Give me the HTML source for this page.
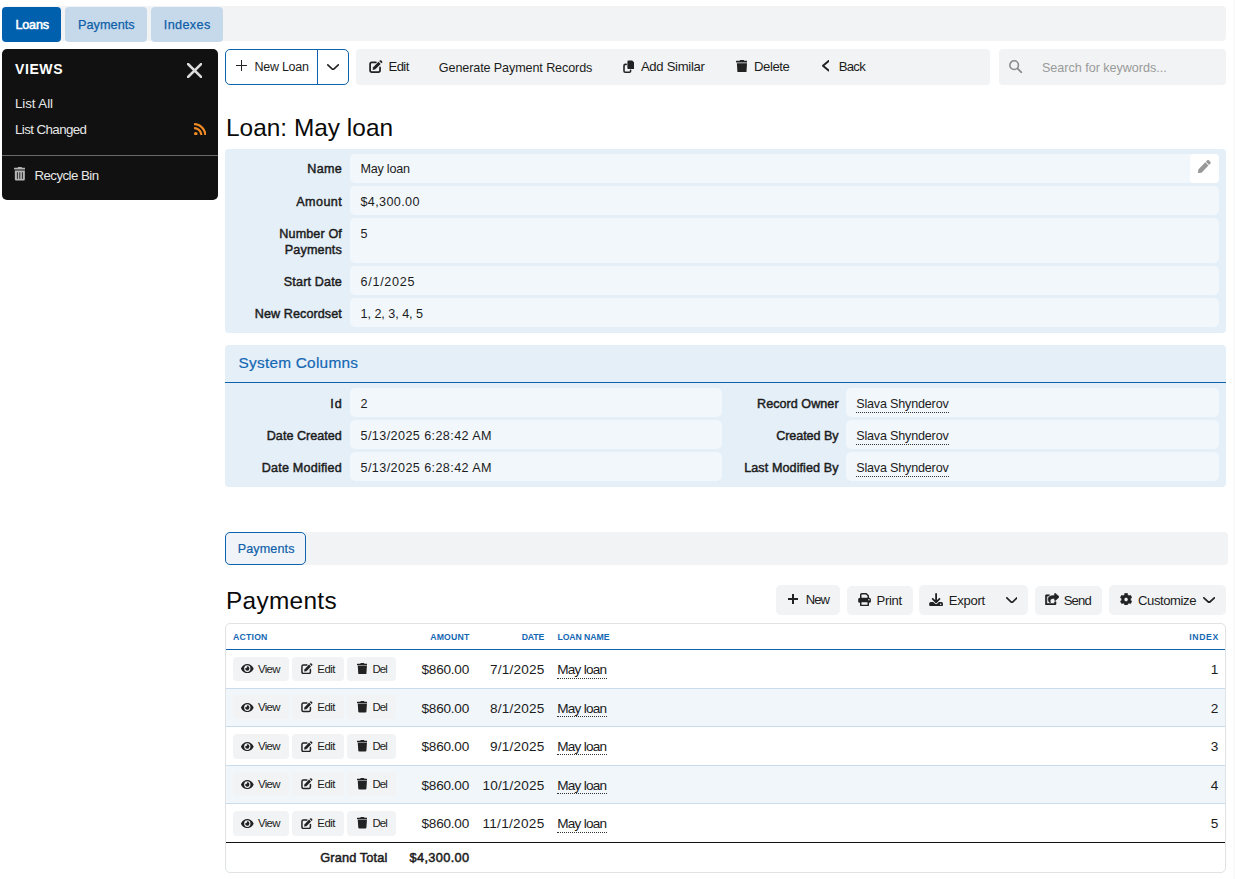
<!DOCTYPE html>
<html lang="en"><head><meta charset="utf-8"><title>Loan: May loan</title>
<style>
html,body{margin:0;padding:0;background:#fff;}
body{width:1235px;height:879px;position:relative;overflow:hidden;font-family:"Liberation Sans", sans-serif;color:#1c1c1c;}
.b{position:absolute;display:block;}
.t{position:absolute;white-space:pre;line-height:1;}
</style></head><body>
<div class="b" style="left:1233px;top:0px;width:2px;height:879px;background:#fafafa;"></div>
<div class="b" style="left:2px;top:6px;width:1224px;height:34.8px;background:#f1f3f4;border-radius:4px;"></div>
<div class="b" style="left:2px;top:7px;width:59px;height:34.8px;background:#0060ae;border-radius:4px;"></div>
<div class="b" style="left:65px;top:7px;width:82px;height:34.8px;background:#c6d9ea;border-radius:4px;"></div>
<div class="b" style="left:151px;top:7px;width:72px;height:34.8px;background:#c6d9ea;border-radius:4px;"></div>
<div class="b" style="left:2px;top:49px;width:216px;height:151px;background:#111;border-radius:5px;"></div>
<div class="b" style="left:2px;top:155px;width:216px;height:1px;background:#6a6a6a;"></div>
<div class="b" style="left:225px;top:49px;width:124px;height:36px;background:#fff;border-radius:5px;border:1.3px solid #0f62ac;box-sizing:border-box;"></div>
<div class="b" style="left:317px;top:49px;width:1.3px;height:36px;background:#0f62ac;"></div>
<div class="b" style="left:236.3px;top:64.525px;width:10.6px;height:1.45px;background:#222;"></div>
<div class="b" style="left:240.87500000000003px;top:59.9px;width:1.45px;height:10.7px;background:#222;"></div>
<div class="b" style="left:356px;top:49px;width:633.5px;height:36px;background:#f1f3f4;border-radius:4px;"></div>
<div class="b" style="left:998.5px;top:49px;width:227.5px;height:36px;background:#f1f3f4;border-radius:4px;"></div>
<div class="b" style="left:225px;top:149px;width:1001px;height:183.8px;background:#e5eff8;border-radius:4px;"></div>
<div class="b" style="left:349.6px;top:154px;width:869.4px;height:28.8px;background:#f2f7fb;border-radius:5px;"></div>
<div class="b" style="left:349.6px;top:186px;width:869.4px;height:28.8px;background:#f2f7fb;border-radius:5px;"></div>
<div class="b" style="left:349.6px;top:218px;width:869.4px;height:44.8px;background:#f2f7fb;border-radius:5px;"></div>
<div class="b" style="left:349.6px;top:266px;width:869.4px;height:28.8px;background:#f2f7fb;border-radius:5px;"></div>
<div class="b" style="left:349.6px;top:298px;width:869.4px;height:28.8px;background:#f2f7fb;border-radius:5px;"></div>
<div class="b" style="left:1190px;top:154px;width:28.8px;height:28.8px;background:#fff;border-radius:4px;"></div>
<div class="b" style="left:225px;top:345px;width:1001px;height:141.7px;background:#e5eff8;border-radius:4px;"></div>
<div class="b" style="left:225px;top:381.5px;width:1001px;height:1.2px;background:#0f62ac;"></div>
<div class="b" style="left:349.6px;top:388px;width:372.4px;height:28.8px;background:#f2f7fb;border-radius:5px;"></div>
<div class="b" style="left:846px;top:388px;width:373px;height:28.8px;background:#f2f7fb;border-radius:5px;"></div>
<div class="b" style="left:349.6px;top:420px;width:372.4px;height:28.8px;background:#f2f7fb;border-radius:5px;"></div>
<div class="b" style="left:846px;top:420px;width:373px;height:28.8px;background:#f2f7fb;border-radius:5px;"></div>
<div class="b" style="left:349.6px;top:452px;width:372.4px;height:28.8px;background:#f2f7fb;border-radius:5px;"></div>
<div class="b" style="left:846px;top:452px;width:373px;height:28.8px;background:#f2f7fb;border-radius:5px;"></div>
<div class="b" style="left:856.2px;top:411.5px;width:92.8px;height:1.0px;background:transparent;border-bottom:1px dotted #333;height:0;"></div>
<div class="b" style="left:856.2px;top:443.5px;width:92.8px;height:1.0px;background:transparent;border-bottom:1px dotted #333;height:0;"></div>
<div class="b" style="left:856.2px;top:475.5px;width:92.8px;height:1.0px;background:transparent;border-bottom:1px dotted #333;height:0;"></div>
<div class="b" style="left:225px;top:532px;width:1003px;height:33px;background:#f1f3f4;border-radius:4px;"></div>
<div class="b" style="left:225px;top:532px;width:80.5px;height:33px;background:#f0f4f9;border-radius:5px;border:1.2px solid #0f62ac;box-sizing:border-box;"></div>
<div class="b" style="left:776px;top:585.2px;width:64px;height:29.4px;background:#f1f3f4;border-radius:5px;"></div>
<div class="b" style="left:788.1px;top:598.475px;width:10.2px;height:1.45px;background:#222;"></div>
<div class="b" style="left:792.475px;top:594px;width:1.45px;height:10.4px;background:#222;"></div>
<div class="b" style="left:847.3px;top:585.8px;width:65.5px;height:28.8px;background:#f1f3f4;border-radius:5px;"></div>
<div class="b" style="left:919px;top:585.2px;width:109px;height:29.4px;background:#f1f3f4;border-radius:5px;"></div>
<div class="b" style="left:1035.2px;top:585.8px;width:66.6px;height:28.8px;background:#f1f3f4;border-radius:5px;"></div>
<div class="b" style="left:1109px;top:585.2px;width:117px;height:29.4px;background:#f1f3f4;border-radius:5px;"></div>
<div class="b" style="left:225px;top:623px;width:1001px;height:249.8px;background:#fff;border-radius:5px;border:1px solid #dfe3e6;box-sizing:border-box;"></div>
<div class="b" style="left:226px;top:688.3px;width:999px;height:38.1px;background:#f1f6fa;"></div>
<div class="b" style="left:226px;top:765.4px;width:999px;height:38.0px;background:#f1f6fa;"></div>
<div class="b" style="left:226px;top:687.8px;width:999px;height:1.0px;background:#c9dcee;"></div>
<div class="b" style="left:226px;top:725.9px;width:999px;height:1.0px;background:#c9dcee;"></div>
<div class="b" style="left:226px;top:764.9px;width:999px;height:1.0px;background:#c9dcee;"></div>
<div class="b" style="left:226px;top:802.9px;width:999px;height:1.0px;background:#c9dcee;"></div>
<div class="b" style="left:226px;top:648.8px;width:999px;height:1.2px;background:#0f62ac;"></div>
<div class="b" style="left:226px;top:842.1px;width:999px;height:1.2px;background:#111;"></div>
<div class="b" style="left:233.1px;top:657.3px;width:55.5px;height:23.5px;background:#f1f3f4;border-radius:4px;"></div>
<div class="b" style="left:292.2px;top:657.3px;width:51.5px;height:23.5px;background:#f1f3f4;border-radius:4px;"></div>
<div class="b" style="left:347.3px;top:657.3px;width:48.6px;height:23.5px;background:#f1f3f4;border-radius:4px;"></div>
<div class="b" style="left:557px;top:677.5px;width:49.6px;height:1.0px;background:transparent;border-bottom:1px dotted #333;height:0;"></div>
<div class="b" style="left:233.1px;top:695.1px;width:55.5px;height:24.3px;background:#f1f3f4;border-radius:4px;"></div>
<div class="b" style="left:292.2px;top:695.1px;width:51.5px;height:24.3px;background:#f1f3f4;border-radius:4px;"></div>
<div class="b" style="left:347.3px;top:695.1px;width:48.6px;height:24.3px;background:#f1f3f4;border-radius:4px;"></div>
<div class="b" style="left:557px;top:716.1px;width:49.6px;height:1.0px;background:transparent;border-bottom:1px dotted #333;height:0;"></div>
<div class="b" style="left:233.1px;top:734.3px;width:55.5px;height:24.3px;background:#f1f3f4;border-radius:4px;"></div>
<div class="b" style="left:292.2px;top:734.3px;width:51.5px;height:24.3px;background:#f1f3f4;border-radius:4px;"></div>
<div class="b" style="left:347.3px;top:734.3px;width:48.6px;height:24.3px;background:#f1f3f4;border-radius:4px;"></div>
<div class="b" style="left:557px;top:754.1px;width:49.6px;height:1.0px;background:transparent;border-bottom:1px dotted #333;height:0;"></div>
<div class="b" style="left:233.1px;top:772.1px;width:55.5px;height:24.3px;background:#f1f3f4;border-radius:4px;"></div>
<div class="b" style="left:292.2px;top:772.1px;width:51.5px;height:24.3px;background:#f1f3f4;border-radius:4px;"></div>
<div class="b" style="left:347.3px;top:772.1px;width:48.6px;height:24.3px;background:#f1f3f4;border-radius:4px;"></div>
<div class="b" style="left:557px;top:793.3px;width:49.6px;height:1.0px;background:transparent;border-bottom:1px dotted #333;height:0;"></div>
<div class="b" style="left:233.1px;top:811.3px;width:55.5px;height:24.3px;background:#f1f3f4;border-radius:4px;"></div>
<div class="b" style="left:292.2px;top:811.3px;width:51.5px;height:24.3px;background:#f1f3f4;border-radius:4px;"></div>
<div class="b" style="left:347.3px;top:811.3px;width:48.6px;height:24.3px;background:#f1f3f4;border-radius:4px;"></div>
<div class="b" style="left:557px;top:831.5px;width:49.6px;height:1.0px;background:transparent;border-bottom:1px dotted #333;height:0;"></div>
<svg class="b" style="left:186.8px;top:62.9px;" width="15.3" height="15.0" viewBox="0 0 15.3 15" fill="#222" stroke="none" preserveAspectRatio="none"><path d="M1 1L14.3 14M14.3 1L1 14" fill="none" stroke="#dcdcdc" stroke-width="2.5" stroke-linecap="round"/></svg>
<svg class="b" style="left:193.7px;top:122.8px;" width="12.5" height="12.5" viewBox="0 32 448 448" fill="#f08a24" stroke="none" preserveAspectRatio="none"><path d="M128.081 415.959c0 35.369-28.672 64.041-64.041 64.041S0 451.328 0 415.959s28.672-64.041 64.041-64.041 64.040 28.673 64.040 64.041zm175.660 47.250c-8.354-154.600-132.185-278.587-286.950-286.950C7.656 175.765 0 183.105 0 192.253v48.069c0 8.415 6.490 15.472 14.887 16.018 111.832 7.284 201.473 96.702 208.772 208.772.547 8.397 7.604 14.887 16.018 14.887h48.069c9.149.001 16.489-7.655 15.995-16.790zm144.249.288C439.596 229.677 251.465 40.445 16.503 32.010 7.473 31.686 0 38.981 0 48.016v48.068c0 8.625 6.835 15.645 15.453 15.999 191.179 7.839 344.627 161.316 352.465 352.465.353 8.618 7.373 15.453 15.999 15.453h48.068c9.034-.001 16.329-7.474 16.005-16.504z"/></svg>
<svg class="b" style="left:13.6px;top:167.3px;" width="11.7" height="13.6" viewBox="0 0 448 512" fill="#b5b5b5" stroke="none" preserveAspectRatio="none"><path d="M32 464a48 48 0 0 0 48 48h288a48 48 0 0 0 48-48V128H32zm272-256a16 16 0 0 1 32 0v224a16 16 0 0 1-32 0zm-96 0a16 16 0 0 1 32 0v224a16 16 0 0 1-32 0zm-96 0a16 16 0 0 1 32 0v224a16 16 0 0 1-32 0zM432 32H312l-9.400-18.700A24 24 0 0 0 281.100 0H166.800a23.720 23.720 0 0 0-21.400 13.300L136 32H16A16 16 0 0 0 0 48v32a16 16 0 0 0 16 16h416a16 16 0 0 0 16-16V48a16 16 0 0 0-16-16z"/></svg>
<svg class="b" style="left:326.9px;top:63.6px;" width="12.1" height="6.6" viewBox="0 0 12.100000000000023 6.600000000000001" fill="#222" stroke="none" preserveAspectRatio="none"><polyline points="0.8,0.8 6.050000000000011,5.800000000000002 11.300000000000022,0.8" fill="none" stroke="#222" stroke-width="1.6" stroke-linecap="round" stroke-linejoin="round"/></svg>
<svg class="b" style="left:369px;top:59.5px;" width="13.6" height="13.0" viewBox="0 0 13.6 13" fill="#222" stroke="none" preserveAspectRatio="none"><path d="M6.9 2.35H2.9a1.8 1.8 0 0 0-1.8 1.8v6.1a1.8 1.8 0 0 0 1.8 1.8h6.35a1.8 1.8 0 0 0 1.8-1.8V7.4" fill="none" stroke="#222" stroke-width="1.75" stroke-linecap="round"/><path d="M3.6 9.9l.55-2.75L9.5 1.8l2.2 2.2-5.35 5.35z" fill="#222"/><path d="M10.2 1.1l.55-.55a1.15 1.15 0 0 1 1.6 0l.65.65a1.15 1.15 0 0 1 0 1.6l-.55.55z" fill="#222"/></svg>
<svg class="b" style="left:622.8px;top:59.6px;" width="11.6" height="13.0" viewBox="0 0 11.6 13" fill="#222" stroke="none" preserveAspectRatio="none"><path d="M3.2 4.4H2.3a1.3 1.3 0 0 0-1.3 1.3v5.2a1.3 1.3 0 0 0 1.3 1.3h4a1.3 1.3 0 0 0 1.3-1.3v-0.5" fill="none" stroke="#222" stroke-width="1.6" stroke-linecap="round"/><path d="M5.6 0.4H9.2L11.4 2.6V7.9a1.2 1.2 0 0 1-1.2 1.2H5.6a1.2 1.2 0 0 1-1.2-1.2V1.6a1.2 1.2 0 0 1 1.2-1.2z" fill="#222"/></svg>
<svg class="b" style="left:735.6px;top:59.6px;" width="11.9" height="12.9" viewBox="0 0 448 512" fill="#222" stroke="none" preserveAspectRatio="none"><path d="M432 32H312l-9.400-18.700A24 24 0 0 0 281.100 0H166.800a23.720 23.720 0 0 0-21.400 13.300L136 32H16A16 16 0 0 0 0 48v32a16 16 0 0 0 16 16h416a16 16 0 0 0 16-16V48a16 16 0 0 0-16-16zM53.200 467a48 48 0 0 0 47.900 45h245.800a48 48 0 0 0 47.900-45L416 128H32z"/></svg>
<svg class="b" style="left:821.6px;top:60.3px;" width="7.6" height="11.5" viewBox="0 0 7.600000000000023 11.5" fill="#222" stroke="none" preserveAspectRatio="none"><polyline points="6.650000000000023,0.95 0.95,5.75 6.650000000000023,10.55" fill="none" stroke="#222" stroke-width="1.9" stroke-linecap="round" stroke-linejoin="round"/></svg>
<svg class="b" style="left:1009.4px;top:60.1px;" width="13.2" height="13.2" viewBox="0 0 12.8 12.8" fill="#222" stroke="none" preserveAspectRatio="none"><circle cx="5" cy="5" r="4.2" fill="none" stroke="#8a8a8a" stroke-width="1.5"/><line x1="8.2" y1="8.2" x2="12" y2="12" stroke="#8a8a8a" stroke-width="1.7" stroke-linecap="round"/></svg>
<svg class="b" style="left:1198.2px;top:160.4px;" width="12.8" height="13.0" viewBox="0 0 512 512" fill="#989898" stroke="none" preserveAspectRatio="none"><path d="M290.740 93.240l128.020 128.020-277.990 277.990-114.140 12.600C11.350 513.540-1.560 500.620.140 485.340l12.700-114.220 277.900-277.880zm207.200-19.060l-60.110-60.110c-18.750-18.750-49.160-18.750-67.910 0l-56.550 56.550 128.020 128.020 56.550-56.550c18.750-18.760 18.750-49.160 0-67.910z"/></svg>
<svg class="b" style="left:857.7px;top:592.5px;" width="13.1" height="13.3" viewBox="0 0 13.1 13.3" fill="#222" stroke="none" preserveAspectRatio="none"><path d="M2.75 5V1.75a1 1 0 0 1 1-1h4.5l2 2V5" fill="none" stroke="#222" stroke-width="1.5" stroke-linejoin="round"/><rect x="0.2" y="4.8" width="12.7" height="5" rx="1.6" fill="#222"/><circle cx="10.9" cy="6.7" r="0.7" fill="#f1f3f4"/><rect x="2.75" y="8.4" width="7.5" height="4.1" rx="0.6" fill="#f1f3f4" stroke="#222" stroke-width="1.5"/></svg>
<svg class="b" style="left:928.9px;top:592.5px;" width="14.2" height="13.3" viewBox="0 0 14.2 13.3" fill="#222" stroke="none" preserveAspectRatio="none"><path d="M1.7 8.9H12.5a1.5 1.5 0 0 1 1.5 1.5v1.4a1.5 1.5 0 0 1-1.5 1.5H1.7a1.5 1.5 0 0 1-1.5-1.5v-1.4a1.5 1.5 0 0 1 1.5-1.5z" fill="#222"/><circle cx="11.7" cy="11.15" r="0.75" fill="#f1f3f4"/><path d="M7.1 0.9v8.3M3.7 5.9l3.4 3.4 3.4-3.4" fill="none" stroke="#f1f3f4" stroke-width="3.6" stroke-linecap="round" stroke-linejoin="round"/><path d="M7.1 0.9v8.3M3.7 5.9l3.4 3.4 3.4-3.4" fill="none" stroke="#222" stroke-width="1.8" stroke-linecap="round" stroke-linejoin="round"/></svg>
<svg class="b" style="left:1005.7px;top:596.9px;" width="11.8" height="6.6" viewBox="0 0 11.799999999999955 6.600000000000023" fill="#222" stroke="none" preserveAspectRatio="none"><polyline points="0.85,0.85 5.899999999999977,5.750000000000023 10.949999999999955,0.85" fill="none" stroke="#222" stroke-width="1.7" stroke-linecap="round" stroke-linejoin="round"/></svg>
<svg class="b" style="left:1044.8px;top:592.9px;" width="14.4" height="12.3" viewBox="-11 -11 598 534" fill="#222" stroke="none" preserveAspectRatio="none"><path stroke="#222" stroke-width="22" stroke-linejoin="round" d="M568.482 177.448L424.479 313.433C409.300 327.768 384 317.140 384 295.985v-71.963c-144.575.970-205.566 35.113-164.775 171.353 4.483 14.973-12.846 26.567-25.006 17.330C155.252 383.105 120 326.488 120 269.339c0-143.937 117.599-172.500 264-173.312V24.012c0-21.174 25.317-31.768 40.479-17.448l144.003 135.988c10.020 9.463 10.028 25.425 0 34.896zM384 379.128V448H64V128h50.916a11.990 11.990 0 0 0 8.648-3.693c14.953-15.568 32.237-27.890 51.014-37.676C185.708 80.830 181.584 64 169.033 64H48C21.490 64 0 85.490 0 112v352c0 26.510 21.490 48 48 48h352c26.510 0 48-21.490 48-48v-88.806c0-8.288-8.197-14.066-16.011-11.302a71.830 71.830 0 0 1-34.189 3.377c-7.270-1.046-13.800 4.514-13.800 11.859z"/></svg>
<svg class="b" style="left:1119.5px;top:592.5px;" width="12.2" height="12.9" viewBox="0 0 512 512" fill="#222" stroke="none" preserveAspectRatio="none"><path stroke="#222" stroke-width="18" stroke-linejoin="round" d="M487.400 315.700l-42.600-24.600c4.300-23.200 4.300-47 0-70.200l42.600-24.600c4.900-2.800 7.100-8.600 5.500-14-11.100-35.600-30-67.800-54.700-94.600-3.800-4.100-10-5.100-14.800-2.300L380.800 110c-17.900-15.400-38.500-27.300-60.800-35.100V25.800c0-5.600-3.900-10.500-9.400-11.700-36.700-8.200-74.300-7.800-109.200 0-5.500 1.200-9.400 6.100-9.400 11.700V75c-22.200 7.900-42.800 19.800-60.800 35.100L88.700 85.500c-4.900-2.800-11-1.900-14.800 2.300-24.700 26.700-43.600 58.900-54.700 94.600-1.700 5.400.6 11.200 5.500 14L67.300 221c-4.300 23.200-4.300 47 0 70.200l-42.600 24.600c-4.900 2.800-7.100 8.600-5.500 14 11.100 35.600 30 67.800 54.700 94.600 3.800 4.100 10 5.100 14.800 2.300l42.600-24.600c17.900 15.400 38.500 27.300 60.800 35.100v49.200c0 5.600 3.900 10.500 9.400 11.700 36.700 8.200 74.300 7.800 109.200 0 5.500-1.200 9.400-6.100 9.400-11.700v-49.200c22.200-7.900 42.800-19.800 60.800-35.100l42.600 24.600c4.900 2.800 11 1.900 14.800-2.300 24.700-26.700 43.600-58.900 54.700-94.600 1.500-5.500-.7-11.300-5.600-14.100zM256 336c-44.100 0-80-35.900-80-80s35.900-80 80-80 80 35.900 80 80-35.900 80-80 80z"/></svg>
<svg class="b" style="left:1203.2px;top:596.9px;" width="12.2" height="6.6" viewBox="0 0 12.200000000000045 6.600000000000023" fill="#222" stroke="none" preserveAspectRatio="none"><polyline points="0.85,0.85 6.100000000000023,5.750000000000023 11.350000000000046,0.85" fill="none" stroke="#222" stroke-width="1.7" stroke-linecap="round" stroke-linejoin="round"/></svg>
<svg class="b" style="left:241.2px;top:664.4499999999999px;" width="12.6" height="9.1" viewBox="0 64 576 384" fill="#222" stroke="none" preserveAspectRatio="none"><path d="M572.520 241.400C518.290 135.590 410.930 64 288 64S57.680 135.640 3.480 241.410a32.350 32.350 0 0 0 0 29.190C57.710 376.410 165.070 448 288 448s230.320-71.640 284.520-177.410a32.350 32.350 0 0 0 0-29.190zM288 400a144 144 0 1 1 144-144 143.930 143.930 0 0 1-144 144zm0-240a95.310 95.310 0 0 0-25.310 3.790 47.850 47.850 0 0 1-66.900 66.900A95.780 95.780 0 1 0 288 160z"/></svg>
<svg class="b" style="left:301px;top:663.15px;" width="11.6" height="11.3" viewBox="0 0 13.6 13" fill="#222" stroke="none" preserveAspectRatio="none"><path d="M6.9 2.35H2.9a1.8 1.8 0 0 0-1.8 1.8v6.1a1.8 1.8 0 0 0 1.8 1.8h6.35a1.8 1.8 0 0 0 1.8-1.8V7.4" fill="none" stroke="#222" stroke-width="1.75" stroke-linecap="round"/><path d="M3.6 9.9l.55-2.75L9.5 1.8l2.2 2.2-5.35 5.35z" fill="#222"/><path d="M10.2 1.1l.55-.55a1.15 1.15 0 0 1 1.6 0l.65.65a1.15 1.15 0 0 1 0 1.6l-.55.55z" fill="#222"/></svg>
<svg class="b" style="left:356.5px;top:662.9499999999999px;" width="10.7" height="11.4" viewBox="0 0 448 512" fill="#222" stroke="none" preserveAspectRatio="none"><path d="M432 32H312l-9.400-18.700A24 24 0 0 0 281.100 0H166.800a23.720 23.720 0 0 0-21.400 13.300L136 32H16A16 16 0 0 0 0 48v32a16 16 0 0 0 16 16h416a16 16 0 0 0 16-16V48a16 16 0 0 0-16-16zM53.200 467a48 48 0 0 0 47.900 45h245.800a48 48 0 0 0 47.900-45L416 128H32z"/></svg>
<svg class="b" style="left:241.2px;top:702.65px;" width="12.6" height="9.1" viewBox="0 64 576 384" fill="#222" stroke="none" preserveAspectRatio="none"><path d="M572.520 241.400C518.290 135.590 410.930 64 288 64S57.680 135.640 3.480 241.410a32.350 32.350 0 0 0 0 29.190C57.710 376.410 165.070 448 288 448s230.320-71.640 284.520-177.410a32.350 32.350 0 0 0 0-29.190zM288 400a144 144 0 1 1 144-144 143.930 143.930 0 0 1-144 144zm0-240a95.310 95.310 0 0 0-25.310 3.790 47.850 47.850 0 0 1-66.900 66.900A95.780 95.780 0 1 0 288 160z"/></svg>
<svg class="b" style="left:301px;top:701.35px;" width="11.6" height="11.3" viewBox="0 0 13.6 13" fill="#222" stroke="none" preserveAspectRatio="none"><path d="M6.9 2.35H2.9a1.8 1.8 0 0 0-1.8 1.8v6.1a1.8 1.8 0 0 0 1.8 1.8h6.35a1.8 1.8 0 0 0 1.8-1.8V7.4" fill="none" stroke="#222" stroke-width="1.75" stroke-linecap="round"/><path d="M3.6 9.9l.55-2.75L9.5 1.8l2.2 2.2-5.35 5.35z" fill="#222"/><path d="M10.2 1.1l.55-.55a1.15 1.15 0 0 1 1.6 0l.65.65a1.15 1.15 0 0 1 0 1.6l-.55.55z" fill="#222"/></svg>
<svg class="b" style="left:356.5px;top:701.15px;" width="10.7" height="11.4" viewBox="0 0 448 512" fill="#222" stroke="none" preserveAspectRatio="none"><path d="M432 32H312l-9.400-18.700A24 24 0 0 0 281.100 0H166.800a23.720 23.720 0 0 0-21.400 13.300L136 32H16A16 16 0 0 0 0 48v32a16 16 0 0 0 16 16h416a16 16 0 0 0 16-16V48a16 16 0 0 0-16-16zM53.200 467a48 48 0 0 0 47.900 45h245.800a48 48 0 0 0 47.900-45L416 128H32z"/></svg>
<svg class="b" style="left:241.2px;top:741.85px;" width="12.6" height="9.1" viewBox="0 64 576 384" fill="#222" stroke="none" preserveAspectRatio="none"><path d="M572.520 241.400C518.290 135.590 410.930 64 288 64S57.680 135.640 3.480 241.410a32.350 32.350 0 0 0 0 29.190C57.710 376.410 165.070 448 288 448s230.320-71.640 284.520-177.410a32.350 32.350 0 0 0 0-29.190zM288 400a144 144 0 1 1 144-144 143.930 143.930 0 0 1-144 144zm0-240a95.310 95.310 0 0 0-25.310 3.790 47.850 47.850 0 0 1-66.900 66.900A95.780 95.780 0 1 0 288 160z"/></svg>
<svg class="b" style="left:301px;top:740.5500000000001px;" width="11.6" height="11.3" viewBox="0 0 13.6 13" fill="#222" stroke="none" preserveAspectRatio="none"><path d="M6.9 2.35H2.9a1.8 1.8 0 0 0-1.8 1.8v6.1a1.8 1.8 0 0 0 1.8 1.8h6.35a1.8 1.8 0 0 0 1.8-1.8V7.4" fill="none" stroke="#222" stroke-width="1.75" stroke-linecap="round"/><path d="M3.6 9.9l.55-2.75L9.5 1.8l2.2 2.2-5.35 5.35z" fill="#222"/><path d="M10.2 1.1l.55-.55a1.15 1.15 0 0 1 1.6 0l.65.65a1.15 1.15 0 0 1 0 1.6l-.55.55z" fill="#222"/></svg>
<svg class="b" style="left:356.5px;top:740.35px;" width="10.7" height="11.4" viewBox="0 0 448 512" fill="#222" stroke="none" preserveAspectRatio="none"><path d="M432 32H312l-9.400-18.700A24 24 0 0 0 281.100 0H166.800a23.720 23.720 0 0 0-21.400 13.300L136 32H16A16 16 0 0 0 0 48v32a16 16 0 0 0 16 16h416a16 16 0 0 0 16-16V48a16 16 0 0 0-16-16zM53.200 467a48 48 0 0 0 47.900 45h245.800a48 48 0 0 0 47.900-45L416 128H32z"/></svg>
<svg class="b" style="left:241.2px;top:779.65px;" width="12.6" height="9.1" viewBox="0 64 576 384" fill="#222" stroke="none" preserveAspectRatio="none"><path d="M572.520 241.400C518.290 135.590 410.930 64 288 64S57.680 135.640 3.480 241.410a32.350 32.350 0 0 0 0 29.190C57.710 376.410 165.070 448 288 448s230.320-71.640 284.520-177.410a32.350 32.350 0 0 0 0-29.190zM288 400a144 144 0 1 1 144-144 143.930 143.930 0 0 1-144 144zm0-240a95.310 95.310 0 0 0-25.310 3.790 47.850 47.850 0 0 1-66.900 66.900A95.780 95.780 0 1 0 288 160z"/></svg>
<svg class="b" style="left:301px;top:778.35px;" width="11.6" height="11.3" viewBox="0 0 13.6 13" fill="#222" stroke="none" preserveAspectRatio="none"><path d="M6.9 2.35H2.9a1.8 1.8 0 0 0-1.8 1.8v6.1a1.8 1.8 0 0 0 1.8 1.8h6.35a1.8 1.8 0 0 0 1.8-1.8V7.4" fill="none" stroke="#222" stroke-width="1.75" stroke-linecap="round"/><path d="M3.6 9.9l.55-2.75L9.5 1.8l2.2 2.2-5.35 5.35z" fill="#222"/><path d="M10.2 1.1l.55-.55a1.15 1.15 0 0 1 1.6 0l.65.65a1.15 1.15 0 0 1 0 1.6l-.55.55z" fill="#222"/></svg>
<svg class="b" style="left:356.5px;top:778.15px;" width="10.7" height="11.4" viewBox="0 0 448 512" fill="#222" stroke="none" preserveAspectRatio="none"><path d="M432 32H312l-9.400-18.700A24 24 0 0 0 281.100 0H166.800a23.720 23.720 0 0 0-21.400 13.300L136 32H16A16 16 0 0 0 0 48v32a16 16 0 0 0 16 16h416a16 16 0 0 0 16-16V48a16 16 0 0 0-16-16zM53.200 467a48 48 0 0 0 47.900 45h245.800a48 48 0 0 0 47.900-45L416 128H32z"/></svg>
<svg class="b" style="left:241.2px;top:818.85px;" width="12.6" height="9.1" viewBox="0 64 576 384" fill="#222" stroke="none" preserveAspectRatio="none"><path d="M572.520 241.400C518.290 135.590 410.930 64 288 64S57.680 135.640 3.480 241.410a32.350 32.350 0 0 0 0 29.190C57.710 376.410 165.070 448 288 448s230.320-71.640 284.520-177.410a32.350 32.350 0 0 0 0-29.190zM288 400a144 144 0 1 1 144-144 143.930 143.930 0 0 1-144 144zm0-240a95.310 95.310 0 0 0-25.310 3.790 47.850 47.850 0 0 1-66.900 66.900A95.780 95.780 0 1 0 288 160z"/></svg>
<svg class="b" style="left:301px;top:817.5500000000001px;" width="11.6" height="11.3" viewBox="0 0 13.6 13" fill="#222" stroke="none" preserveAspectRatio="none"><path d="M6.9 2.35H2.9a1.8 1.8 0 0 0-1.8 1.8v6.1a1.8 1.8 0 0 0 1.8 1.8h6.35a1.8 1.8 0 0 0 1.8-1.8V7.4" fill="none" stroke="#222" stroke-width="1.75" stroke-linecap="round"/><path d="M3.6 9.9l.55-2.75L9.5 1.8l2.2 2.2-5.35 5.35z" fill="#222"/><path d="M10.2 1.1l.55-.55a1.15 1.15 0 0 1 1.6 0l.65.65a1.15 1.15 0 0 1 0 1.6l-.55.55z" fill="#222"/></svg>
<svg class="b" style="left:356.5px;top:817.35px;" width="10.7" height="11.4" viewBox="0 0 448 512" fill="#222" stroke="none" preserveAspectRatio="none"><path d="M432 32H312l-9.400-18.700A24 24 0 0 0 281.100 0H166.800a23.720 23.720 0 0 0-21.400 13.300L136 32H16A16 16 0 0 0 0 48v32a16 16 0 0 0 16 16h416a16 16 0 0 0 16-16V48a16 16 0 0 0-16-16zM53.200 467a48 48 0 0 0 47.900 45h245.800a48 48 0 0 0 47.900-45L416 128H32z"/></svg>
<span class="t" style="top:19px;font-size:12.6px;color:#fff;letter-spacing:-0.21px;left:15.5px;-webkit-text-stroke:0.55px #fff;">Loans</span>
<span class="t" style="top:19px;font-size:12.7px;color:#0f5fa8;letter-spacing:0.04px;left:78px;-webkit-text-stroke:0.25px #0f5fa8;">Payments</span>
<span class="t" style="top:19px;font-size:12.7px;color:#0f5fa8;letter-spacing:0.34px;left:163.8px;-webkit-text-stroke:0.25px #0f5fa8;">Indexes</span>
<span class="t" style="top:62px;font-size:14px;font-weight:700;color:#fff;letter-spacing:0.59px;left:15px;">VIEWS</span>
<span class="t" style="top:97px;font-size:13.3px;color:#e8e8e8;letter-spacing:-0.06px;left:15px;">List All</span>
<span class="t" style="top:123px;font-size:13.3px;color:#e8e8e8;letter-spacing:-0.58px;left:15px;">List Changed</span>
<span class="t" style="top:169px;font-size:13.3px;color:#e8e8e8;letter-spacing:-0.55px;left:34.4px;">Recycle Bin</span>
<span class="t" style="top:61px;font-size:12.5px;letter-spacing:-0.27px;left:254.5px;">New Loan</span>
<span class="t" style="top:60px;font-size:13.1px;letter-spacing:-0.62px;left:388.6px;">Edit</span>
<span class="t" style="top:62px;font-size:12.6px;letter-spacing:-0.11px;left:438.8px;">Generate Payment Records</span>
<span class="t" style="top:60px;font-size:13.1px;letter-spacing:-0.3px;left:640.9px;">Add Similar</span>
<span class="t" style="top:60px;font-size:13.1px;letter-spacing:-0.39px;left:754px;">Delete</span>
<span class="t" style="top:60px;font-size:13.1px;letter-spacing:-0.7px;left:838.7px;">Back</span>
<span class="t" style="top:62px;font-size:12.6px;color:#9a9a9a;letter-spacing:-0.03px;left:1042px;">Search for keywords...</span>
<span class="t" style="top:116px;font-size:24.4px;color:#0a0a0a;letter-spacing:0.02px;left:226px;">Loan: May loan</span>
<span class="t" style="top:163px;font-size:12.6px;letter-spacing:0.3px;left:307.31px;-webkit-text-stroke:0.45px #1c1c1c;">Name</span>
<span class="t" style="top:163px;font-size:12.6px;letter-spacing:-0.23px;left:360.5px;">May loan</span>
<span class="t" style="top:196px;font-size:12.6px;letter-spacing:0.42px;left:296.29px;-webkit-text-stroke:0.45px #1c1c1c;">Amount</span>
<span class="t" style="top:196px;font-size:12.6px;letter-spacing:0.37px;left:360.5px;">$4,300.00</span>
<span class="t" style="top:228px;font-size:12.6px;letter-spacing:0.11px;left:279.33px;-webkit-text-stroke:0.45px #1c1c1c;">Number Of</span>
<span class="t" style="top:244px;font-size:12.6px;letter-spacing:0.14px;left:284.82px;-webkit-text-stroke:0.45px #1c1c1c;">Payments</span>
<span class="t" style="top:228px;font-size:12.6px;left:360.5px;">5</span>
<span class="t" style="top:276px;font-size:12.6px;letter-spacing:0.14px;left:283.84px;-webkit-text-stroke:0.45px #1c1c1c;">Start Date</span>
<span class="t" style="top:276px;font-size:12.6px;letter-spacing:0.71px;left:360.5px;">6/1/2025</span>
<span class="t" style="top:308px;font-size:12.6px;letter-spacing:0.08px;left:254.75px;-webkit-text-stroke:0.45px #1c1c1c;">New Recordset</span>
<span class="t" style="top:308px;font-size:12.6px;letter-spacing:-0.04px;left:360.5px;">1, 2, 3, 4, 5</span>
<span class="t" style="top:355px;font-size:15.4px;color:#1467b3;letter-spacing:0.24px;left:238.5px;-webkit-text-stroke:0.2px #1467b3;">System Columns</span>
<span class="t" style="top:398px;font-size:12.6px;letter-spacing:0.98px;left:330.3px;-webkit-text-stroke:0.45px #1c1c1c;">Id</span>
<span class="t" style="top:398px;font-size:12.6px;left:360.5px;">2</span>
<span class="t" style="top:430px;font-size:12.6px;letter-spacing:0.01px;left:266.78px;-webkit-text-stroke:0.45px #1c1c1c;">Date Created</span>
<span class="t" style="top:430px;font-size:12.6px;letter-spacing:0.41px;left:360.5px;">5/13/2025 6:28:42 AM</span>
<span class="t" style="top:462px;font-size:12.6px;letter-spacing:0.19px;left:261.82px;-webkit-text-stroke:0.45px #1c1c1c;">Date Modified</span>
<span class="t" style="top:462px;font-size:12.6px;letter-spacing:0.41px;left:360.5px;">5/13/2025 6:28:42 AM</span>
<span class="t" style="top:398px;font-size:12.6px;letter-spacing:0.03px;left:757.07px;-webkit-text-stroke:0.45px #1c1c1c;">Record Owner</span>
<span class="t" style="top:430px;font-size:12.6px;letter-spacing:-0.06px;left:776.14px;-webkit-text-stroke:0.45px #1c1c1c;">Created By</span>
<span class="t" style="top:462px;font-size:12.6px;letter-spacing:0.09px;left:744.14px;-webkit-text-stroke:0.45px #1c1c1c;">Last Modified By</span>
<span class="t" style="top:398px;font-size:12.6px;letter-spacing:-0.19px;left:856.2px;">Slava Shynderov</span>
<span class="t" style="top:430px;font-size:12.6px;letter-spacing:-0.19px;left:856.2px;">Slava Shynderov</span>
<span class="t" style="top:462px;font-size:12.6px;letter-spacing:-0.19px;left:856.2px;">Slava Shynderov</span>
<span class="t" style="top:543px;font-size:12.6px;color:#0f5fa8;letter-spacing:0.11px;left:237.7px;-webkit-text-stroke:0.2px #0f5fa8;">Payments</span>
<span class="t" style="top:589px;font-size:24.4px;color:#0a0a0a;letter-spacing:0.31px;left:226px;">Payments</span>
<span class="t" style="top:593px;font-size:13.1px;letter-spacing:-1.0px;left:805.8px;">New</span>
<span class="t" style="top:594px;font-size:13.1px;letter-spacing:-0.31px;left:876.5px;">Print</span>
<span class="t" style="top:594px;font-size:13.1px;letter-spacing:-0.31px;left:948.8px;">Export</span>
<span class="t" style="top:594px;font-size:13.1px;letter-spacing:-0.8px;left:1063.7px;">Send</span>
<span class="t" style="top:594px;font-size:13.1px;letter-spacing:-0.43px;left:1138px;">Customize</span>
<span class="t" style="top:633px;font-size:8.7px;font-weight:700;color:#1467b3;letter-spacing:0.2px;left:233.1px;">ACTION</span>
<span class="t" style="top:633px;font-size:8.7px;font-weight:700;color:#1467b3;letter-spacing:0.17px;left:430.22px;">AMOUNT</span>
<span class="t" style="top:633px;font-size:8.7px;font-weight:700;color:#1467b3;letter-spacing:-0.21px;left:521.81px;">DATE</span>
<span class="t" style="top:633px;font-size:8.7px;font-weight:700;color:#1467b3;letter-spacing:-0.06px;left:557.4px;">LOAN NAME</span>
<span class="t" style="top:633px;font-size:8.7px;font-weight:700;color:#1467b3;letter-spacing:0.61px;left:1189.3px;">INDEX</span>
<span class="t" style="top:664px;font-size:11.4px;letter-spacing:-0.63px;left:257.9px;">View</span>
<span class="t" style="top:664px;font-size:11.4px;letter-spacing:-0.51px;left:317.3px;">Edit</span>
<span class="t" style="top:664px;font-size:11.4px;letter-spacing:-0.9px;left:372.4px;">Del</span>
<span class="t" style="top:663px;font-size:13.6px;letter-spacing:-0.24px;left:421.5px;">$860.00</span>
<span class="t" style="top:663px;font-size:13.6px;letter-spacing:0.18px;left:490.02px;">7/1/2025</span>
<span class="t" style="top:663px;font-size:13.6px;letter-spacing:-0.74px;left:557.2px;">May loan</span>
<span class="t" style="top:663px;font-size:13.6px;left:1210.74px;">1</span>
<span class="t" style="top:702px;font-size:11.4px;letter-spacing:-0.63px;left:257.9px;">View</span>
<span class="t" style="top:702px;font-size:11.4px;letter-spacing:-0.51px;left:317.3px;">Edit</span>
<span class="t" style="top:702px;font-size:11.4px;letter-spacing:-0.9px;left:372.4px;">Del</span>
<span class="t" style="top:702px;font-size:13.6px;letter-spacing:-0.24px;left:421.5px;">$860.00</span>
<span class="t" style="top:702px;font-size:13.6px;letter-spacing:0.18px;left:490.02px;">8/1/2025</span>
<span class="t" style="top:702px;font-size:13.6px;letter-spacing:-0.74px;left:557.2px;">May loan</span>
<span class="t" style="top:702px;font-size:13.6px;left:1210.74px;">2</span>
<span class="t" style="top:741px;font-size:11.4px;letter-spacing:-0.63px;left:257.9px;">View</span>
<span class="t" style="top:741px;font-size:11.4px;letter-spacing:-0.51px;left:317.3px;">Edit</span>
<span class="t" style="top:741px;font-size:11.4px;letter-spacing:-0.9px;left:372.4px;">Del</span>
<span class="t" style="top:740px;font-size:13.6px;letter-spacing:-0.24px;left:421.5px;">$860.00</span>
<span class="t" style="top:740px;font-size:13.6px;letter-spacing:0.18px;left:490.02px;">9/1/2025</span>
<span class="t" style="top:740px;font-size:13.6px;letter-spacing:-0.74px;left:557.2px;">May loan</span>
<span class="t" style="top:740px;font-size:13.6px;left:1210.74px;">3</span>
<span class="t" style="top:779px;font-size:11.4px;letter-spacing:-0.63px;left:257.9px;">View</span>
<span class="t" style="top:779px;font-size:11.4px;letter-spacing:-0.51px;left:317.3px;">Edit</span>
<span class="t" style="top:779px;font-size:11.4px;letter-spacing:-0.9px;left:372.4px;">Del</span>
<span class="t" style="top:779px;font-size:13.6px;letter-spacing:-0.24px;left:421.5px;">$860.00</span>
<span class="t" style="top:779px;font-size:13.6px;letter-spacing:0.16px;left:482.44px;">10/1/2025</span>
<span class="t" style="top:779px;font-size:13.6px;letter-spacing:-0.74px;left:557.2px;">May loan</span>
<span class="t" style="top:779px;font-size:13.6px;left:1210.74px;">4</span>
<span class="t" style="top:818px;font-size:11.4px;letter-spacing:-0.63px;left:257.9px;">View</span>
<span class="t" style="top:818px;font-size:11.4px;letter-spacing:-0.51px;left:317.3px;">Edit</span>
<span class="t" style="top:818px;font-size:11.4px;letter-spacing:-0.9px;left:372.4px;">Del</span>
<span class="t" style="top:817px;font-size:13.6px;letter-spacing:-0.24px;left:421.5px;">$860.00</span>
<span class="t" style="top:817px;font-size:13.6px;letter-spacing:0.29px;left:482.41px;">11/1/2025</span>
<span class="t" style="top:817px;font-size:13.6px;letter-spacing:-0.74px;left:557.2px;">May loan</span>
<span class="t" style="top:817px;font-size:13.6px;left:1210.74px;">5</span>
<span class="t" style="top:852px;font-size:12.8px;letter-spacing:0.13px;left:320.18px;-webkit-text-stroke:0.5px #1c1c1c;">Grand Total</span>
<span class="t" style="top:852px;font-size:12.8px;letter-spacing:0.33px;left:409.52px;-webkit-text-stroke:0.5px #1c1c1c;">$4,300.00</span>
</body></html>
